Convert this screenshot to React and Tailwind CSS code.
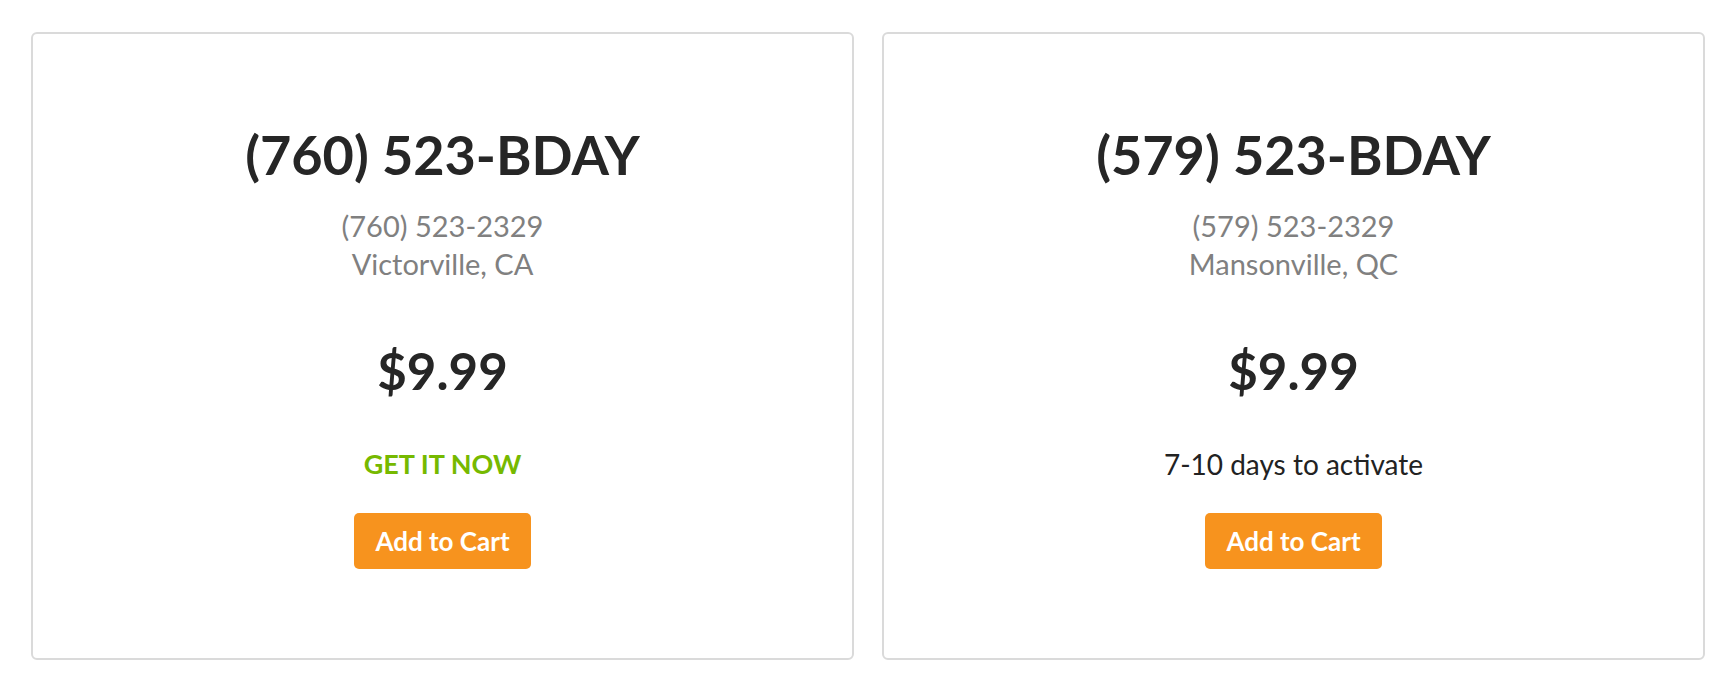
import React from "react";

const cards = [
  {
    vanity: "(760) 523-BDAY",
    number: "(760) 523-2329",
    city: "Victorville, CA",
    price: "$9.99",
    now: true,
  },
  {
    vanity: "(579) 523-BDAY",
    number: "(579) 523-2329",
    city: "Mansonville, QC",
    price: "$9.99",
    now: false,
  },
];

function Card({ c }) {
  return (
    <div className="h-[628px] rounded-[6px] border-2 border-[#dadada] bg-white flex flex-col items-center pt-[87px] text-center">
      <div className="text-[54px] leading-[67px] font-bold text-[#262626]">{c.vanity}</div>
      <div className="mt-[19px] text-[29px] leading-[38px] text-[#808080]">
        <div>{c.number}</div>
        <div>{c.city}</div>
      </div>
      <div className="mt-[58px] text-[51px] leading-[60px] font-bold text-[#262626]">{c.price}</div>
      {c.now ? (
        <div className="mt-[46px] text-[27px] leading-[34px] font-bold text-[#76b900]">GET IT NOW</div>
      ) : (
        <div className="mt-[46px] text-[28px] leading-[34px] text-[#222222]">7-10 days to activate</div>
      )}
      <button className="mt-[32px] h-[56px] px-[21px] rounded-[5px] bg-[#f7931e] text-white text-[26px] font-bold leading-[56px]">
        Add to Cart
      </button>
    </div>
  );
}

export default function App() {
  return (
    <div
      className="w-[1726px] h-[686px] bg-white pt-[32px] pl-[31px] pr-[21px]"
      style={{ fontFamily: "Lato, 'Noto Sans', sans-serif" }}
    >
      <div className="grid grid-cols-2 gap-[28px]">
        {cards.map((c) => (
          <Card key={c.vanity} c={c} />
        ))}
      </div>
    </div>
  );
}
